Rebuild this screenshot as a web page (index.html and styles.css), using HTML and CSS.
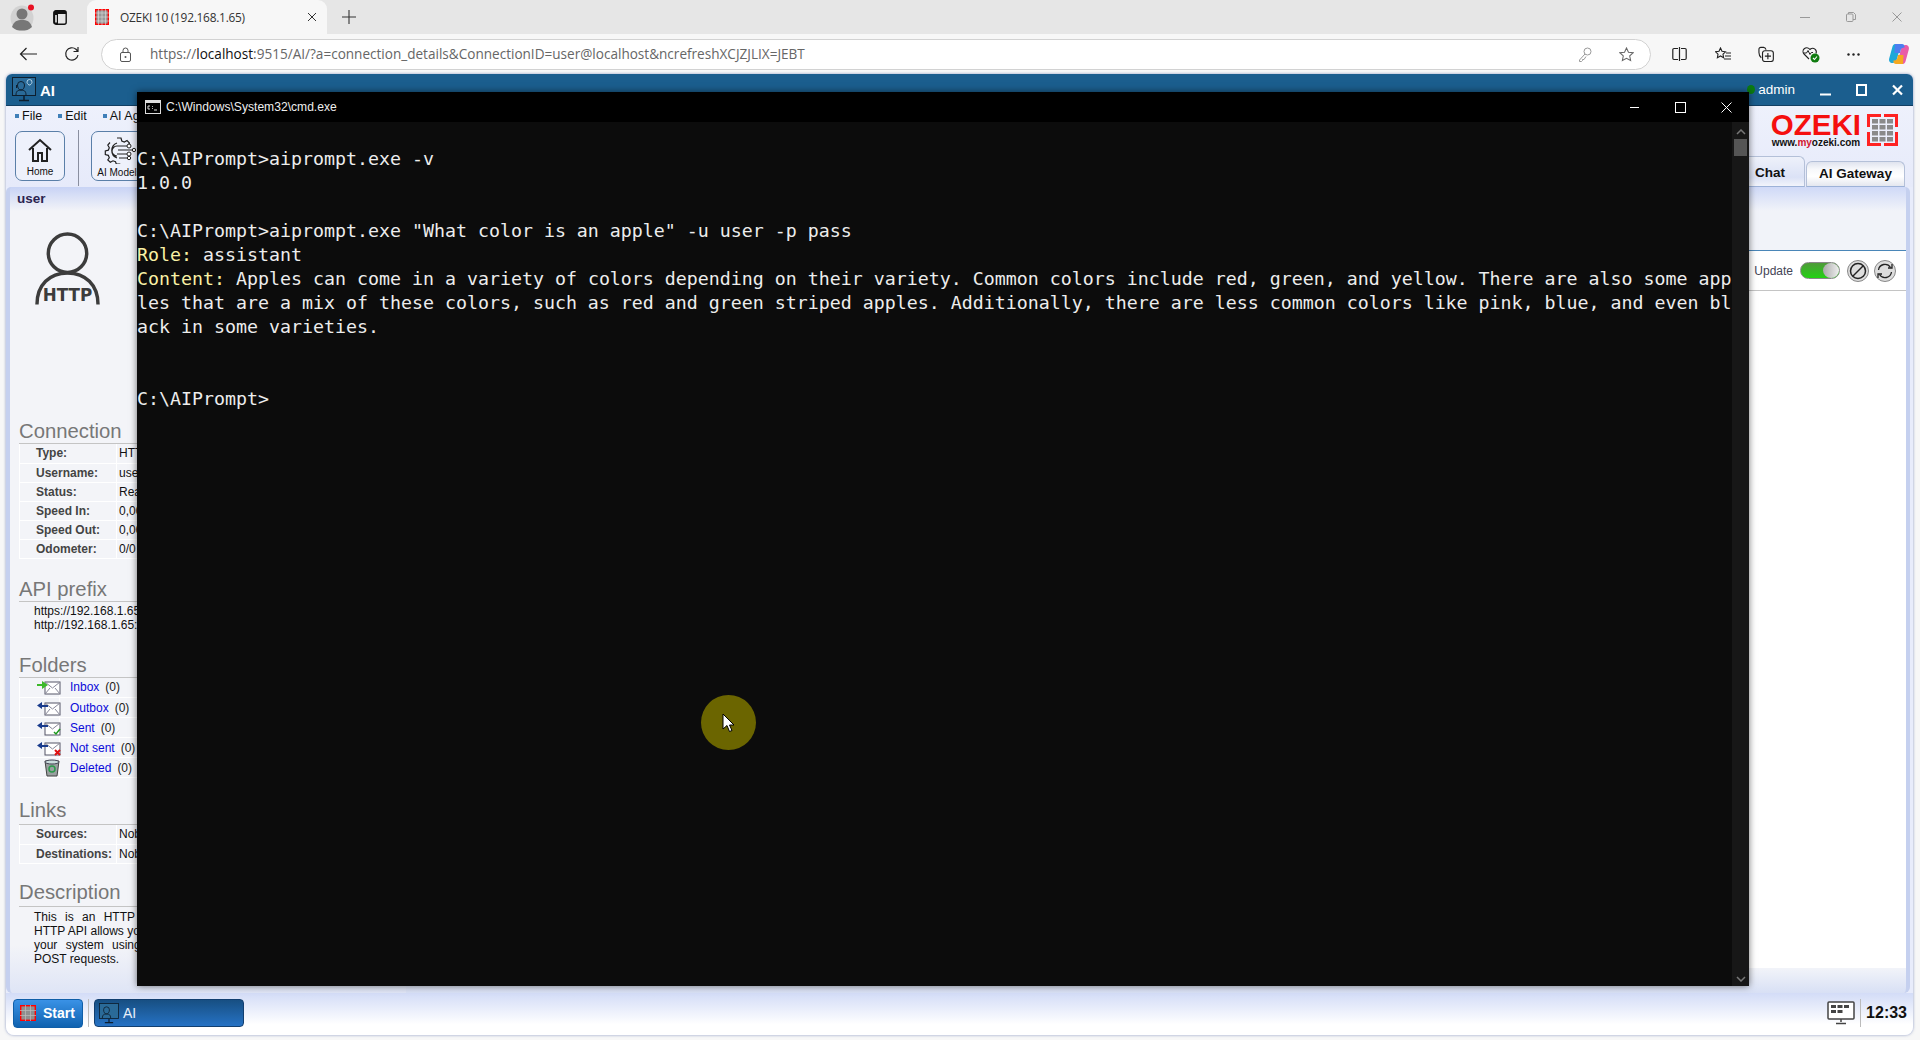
FILE: index.html
```html
<!DOCTYPE html>
<html lang="en">
<head>
<meta charset="utf-8">
<title>OZEKI 10 (192.168.1.65)</title>
<link rel="stylesheet" href="styles.css">
</head>
<body>
<div class="tabstrip">
  <div class="avatar"><svg width="26" height="28" viewBox="0 0 26 28"><ellipse cx="12" cy="15" rx="11.500" ry="12.500" fill="#d2d2d2"/><circle cx="12" cy="11" r="5.500" fill="#777"/><path d="M2 24c2-6 5-7 10-7s8 1 10 7c-3 3-6 3.500-10 3.500S5 27 2 24z" fill="#777"/><circle cx="21" cy="4.500" r="3" fill="#e81123"/></svg></div>
  <svg class="tabs-btn" width="14" height="15" viewBox="0 0 14 15"><rect x=".8" y=".8" width="12.400" height="13.400" rx="2" fill="none" stroke="#111" stroke-width="1.400"/><path d="M1 1h12v3H1zM1 4h4v10H1z" fill="#111"/><rect x="2.200" y="5" width="1.600" height="7.500" fill="#eee"/></svg>
  <div class="tab">
    <svg width="14" height="16" viewBox="0 0 14 16"><rect x=".7" y=".7" width="12.600" height="14.600" fill="#999" stroke="#f00" stroke-width="1.400"/><path d="M0 4h14M0 8h14M0 12h14M3.500 0v16M7 0v16M10.500 0v16" stroke="#ddd" stroke-width=".6"/></svg>
    <span class="tab-title">OZEKI 10 (192.168.1.65)</span>
    <svg class="tab-x" width="10" height="10" viewBox="0 0 10 10"><path d="M1 1l8 8M9 1l-8 8" stroke="#333" stroke-width="1"/></svg>
  </div>
  <svg class="tab-new" width="14" height="14" viewBox="0 0 14 14"><path d="M7 0v14M0 7h14" stroke="#333" stroke-width="1.100"/></svg>
  <div class="caption">
    <svg width="10" height="10" viewBox="0 0 10 10"><path d="M0 5.500h10" stroke="#999"/></svg>
    <svg width="10" height="10" viewBox="0 0 10 10"><rect x=".5" y="2" width="6.500" height="7.500" rx="1" fill="none" stroke="#999"/><path d="M2.500 2V.5h5l2 2v5H7" fill="none" stroke="#999"/></svg>
    <svg width="10" height="10" viewBox="0 0 10 10"><path d="M.5.500l9 9M9.500.500l-9 9" stroke="#999"/></svg>
  </div>
</div>
<div class="toolbar">
  <svg class="nav-back" width="18" height="14" viewBox="0 0 18 14"><path d="M7.500 1L1.500 7l6 6M1.500 7H18" fill="none" stroke="#222" stroke-width="1.200"/></svg>
  <svg class="nav-reload" width="16" height="16" viewBox="0 0 16 16"><path d="M14 9A6.200 6.200 0 1 1 12 3.300L14 5.500M14 1v4.500H9.500" fill="none" stroke="#222" stroke-width="1.200"/></svg>
  <div class="address">
    <svg width="11" height="15" viewBox="0 0 11 15"><rect x=".5" y="5.500" width="10" height="9" rx="1.500" fill="none" stroke="#555"/><path d="M3 5.500V3.500a2.500 2.500 0 0 1 5 0v2" fill="none" stroke="#555"/><circle cx="5.500" cy="10" r="1" fill="#555"/></svg>
    <span class="url">https://<b>localhost</b>:9515/AI/?a=connection_details&amp;ConnectionID=user@localhost&amp;ncrefreshXCJZJLIX=JEBT</span>
    <svg class="addr-key" width="14" height="15" viewBox="0 0 14 15"><circle cx="9.500" cy="4.500" r="3.500" fill="none" stroke="#999"/><path d="M7 7l-5.500 6v1.500h2l1-1v-1h1.500l2-3" fill="none" stroke="#999"/></svg>
    <svg class="addr-star" width="15" height="15" viewBox="0 0 16 16"><path d="M8 1l2.100 4.500 5 .6-3.700 3.400 1 4.900L8 12l-4.400 2.400 1-4.900L.9 6.100l5-.6z" fill="none" stroke="#666" stroke-width="1.100"/></svg>
  </div>
  <div class="tools">
    <svg width="15" height="14" viewBox="0 0 15 14"><path d="M6 1.500H2a1.200 1.200 0 0 0-1.200 1.200v8.600A1.200 1.200 0 0 0 2 12.500h4M9 1.500h4a1.200 1.200 0 0 1 1.200 1.200v8.600a1.200 1.200 0 0 1-1.200 1.200H9M7.500 0v14" fill="none" stroke="#222" stroke-width="1.200"/></svg>
    <svg width="16" height="15" viewBox="0 0 16 15"><path d="M5.500 1l1.500 3.300 3.500.5-2.500 2.400.6 3.500-3.100-1.700-3.100 1.700.6-3.500L.5 4.800 4 4.300zM11 6h5M10 9h6M9 12h7" fill="none" stroke="#222" stroke-width="1.100"/></svg>
    <svg width="16" height="16" viewBox="0 0 17 17"><path d="M3.500 12.500C1.500 11 1 9 1 7V3.500a2 2 0 0 1 2-2h3a3 3 0 0 1 2.500 2.500" fill="none" stroke="#222" stroke-width="1.200"/><rect x="4.800" y="5" width="11.500" height="11.500" rx="2.500" fill="none" stroke="#222" stroke-width="1.200"/><path d="M10.500 7.500v6.500M7.300 10.700h6.500" stroke="#222" stroke-width="1.200"/></svg>
    <svg width="18" height="18" viewBox="0 0 18 18"><path d="M7 14L2 9a3.700 3.700 0 0 1 5.500-5L8 4.500l.5-.5A3.700 3.700 0 0 1 14 8.500" fill="none" stroke="#222" stroke-width="1.100"/><path d="M1 8h3.500L6 5.500l2 4 1.300-2H11" fill="none" stroke="#222"/><circle cx="13" cy="13" r="4.500" fill="#107c10"/><path d="M11 13l1.500 1.500 2.500-3" fill="none" stroke="#fff" stroke-width="1.100"/></svg>
    <svg width="13" height="3" viewBox="0 0 13 3"><circle cx="1.500" cy="1.500" r="1.200" fill="#222"/><circle cx="6.500" cy="1.500" r="1.200" fill="#222"/><circle cx="11.500" cy="1.500" r="1.200" fill="#222"/></svg>
    <svg width="22" height="22" viewBox="0 0 22 22"><path d="M7 1h6L9 16c-.6 2.500-2.500 4-4.500 4C2 20 .5 18 1.200 15.500L4.500 3.500C5 2 6 1 7 1z" fill="#1fa8d8"/><path d="M15 21H9l4-15c.6-2.500 2.500-4 4.500-4 2.500 0 4 2 3.300 4.500l-3.300 12C17 20 16 21 15 21z" fill="#e95ca8"/><path d="M7 1h7c2 0 3 2 2.500 3.500a4 4 0 0 0-3.500 1.500l-1 4H6.500z" fill="#4d7df0"/><path d="M15 21H8c-2 0-3-2-2.500-3.500A4 4 0 0 0 9 16l1-4h5.500z" fill="#f5a81f"/></svg>
  </div>
</div>
<main class="desktop">
  <div class="app">
    <header class="app-title">
      <div class="app-name">
        <svg width="24" height="25" viewBox="0 0 24 25"><rect x=".5" y=".5" width="23" height="18" fill="#2a6a98" stroke="#0d1e2e"/><path d="M4 18c0-4 2-5 5-5s5 1 5 5M5.500 8a3.500 3.500 0 0 1 7 0c0 3-1.500 5-3.500 5S5.500 11 5.500 8zM4.500 8v3" fill="none" stroke="#0d1e2e"/><path d="M17 8c-1.500-1-2-2-2-3a2.500 2.500 0 0 1 5 0c0 1-.5 2-2 3z" fill="none" stroke="#cfe6f5" stroke-width=".8"/><path d="M7 23.500h10M12 19v4" stroke="#0d1e2e" stroke-width="1.500"/></svg>
        <span class="app-label">AI</span>
      </div>
      <div class="app-user">
        <i class="status-dot"></i><span class="username">admin</span>
        <svg class="wb" width="11" height="12" viewBox="0 0 11 12"><path d="M0 10.500h11" stroke="#fff" stroke-width="2"/></svg>
        <svg class="wb" width="11" height="12" viewBox="0 0 11 12"><rect x="1" y="1" width="9" height="10" fill="none" stroke="#fff" stroke-width="2"/></svg>
        <svg class="wb" width="11" height="12" viewBox="0 0 11 12"><path d="M1 1.500l9 9M10 1.500l-9 9" stroke="#fff" stroke-width="2.200"/></svg>
      </div>
    </header>
    <section class="ribbon">
      <div class="ribbon-left">
        <nav class="menu"><span>File</span><span>Edit</span><span>AI Agents</span></nav>
        <div class="buttons">
          <button class="tbtn">
            <svg width="24" height="24" viewBox="0 0 24 24"><path d="M1 12L12 2l11 10M5 10v13h5v-8h4v8h5V10" fill="none" stroke="#222" stroke-width="2"/></svg>
            <span>Home</span>
          </button>
          <i class="tsep"></i>
          <button class="tbtn tbtn-wide">
            <svg width="32" height="27" viewBox="0 0 32 27"><path d="M13 1h4l.8 3 2.500 1 2.700-1.500 2.500 2.500-1.500 2.700M6 5.500L3.800 8l1.500 2.700-1 2.500-3 .8v3.500l3 .8 1 2.500L3.800 23l2.500 2.300 2.700-1.500 2.500 1 .8 2.200h4" fill="none" stroke="#222" stroke-width="1.200"/><path d="M13 9a5 5 0 0 0 0 10M13 6a8 8 0 0 0 0 15" fill="none" stroke="#222" stroke-width="1.200"/><path d="M13 9h10M14 13h14M13 17h10M15 21h8" stroke="#222" stroke-width="1"/><circle cx="25" cy="9" r="2" fill="#fff" stroke="#222"/><circle cx="30" cy="13" r="1.700" fill="#fff" stroke="#222"/><circle cx="25" cy="17" r="2" fill="#fff" stroke="#222"/><circle cx="25" cy="21" r="1.700" fill="#fff" stroke="#222"/></svg>
            <span>AI Models</span>
          </button>
        </div>
      </div>
      <div class="ribbon-right">
        <div class="logo">
          <div class="logo-text"><strong>OZEKI</strong><small>www.<em>my</em>ozeki.com</small></div>
          <svg width="31" height="32" viewBox="0 0 31 32"><path d="M14 1.500H1.500V13M1.500 18v12.500H14M17 1.500h12.500V13M29.500 18v12.500H17" fill="none" stroke="#f22" stroke-width="3"/><g fill="#8a8a8a"><rect x="5" y="5" width="6" height="4.500"/><rect x="12.500" y="5" width="6" height="4.500"/><rect x="20" y="5" width="6" height="4.500"/><rect x="5" y="11" width="6" height="4.500"/><rect x="12.500" y="11" width="6" height="4.500"/><rect x="20" y="11" width="6" height="4.500"/><rect x="5" y="17" width="6" height="4.500"/><rect x="12.500" y="17" width="6" height="4.500"/><rect x="20" y="17" width="6" height="4.500"/><rect x="5" y="23" width="6" height="4.500"/><rect x="12.500" y="23" width="6" height="4.500"/><rect x="20" y="23" width="6" height="4.500"/></g></svg>
        </div>
        <div class="maintabs"><span class="mtab mtab-active">Chat</span><span class="mtab">AI Gateway</span></div>
      </div>
    </section>
    <div class="panels">
      <aside class="side">
        <div class="side-title">user</div>
        <svg class="conn-ic" width="65" height="74" viewBox="0 0 66 74"><circle cx="33" cy="21" r="19.500" fill="none" stroke="#3c3c3c" stroke-width="3.500"/><path d="M2 73c0-20 13-32 31-32s31 12 31 32" fill="none" stroke="#3c3c3c" stroke-width="3.500"/><text x="33" y="70" text-anchor="middle" class="http-t">HTTP</text></svg>
        <h3 class="sec sec-conn">Connection</h3>
        <table class="kv">
          <tr><th>Type:</th><td>HTTP API user</td></tr>
          <tr><th>Username:</th><td>user</td></tr>
          <tr><th>Status:</th><td>Ready</td></tr>
          <tr><th>Speed In:</th><td>0,00</td></tr>
          <tr><th>Speed Out:</th><td>0,00</td></tr>
          <tr><th>Odometer:</th><td>0/0</td></tr>
        </table>
        <h3 class="sec sec-api">API prefix</h3>
        <div class="prefix"><div>https://192.168.1.65:9515</div><div>http://192.168.1.65:9515</div></div>
        <h3 class="sec sec-folders">Folders</h3>
        <table class="folders">
          <tr><th><svg width="24" height="16" viewBox="0 0 24 16"><rect x="8" y="3" width="15" height="12" fill="#fff" stroke="#556"/><path d="M8 3l7.500 6L23 3M8 15l5-6M23 15l-5-6" fill="none" stroke="#889"/><path d="M0 5h5V2l6 4-6 4V7H0z" fill="#3cb92a"/></svg></th><td><a>Inbox</a>(0)</td></tr>
          <tr><th><svg width="24" height="16" viewBox="0 0 24 16"><rect x="8" y="3" width="15" height="12" fill="#fff" stroke="#556"/><path d="M8 3l7.500 6L23 3M8 15l5-6M23 15l-5-6" fill="none" stroke="#889"/><path d="M11 5H5V2L0 5.500 5 9V7h6z" fill="#1a3c8c"/></svg></th><td><a>Outbox</a>(0)</td></tr>
          <tr><th><svg width="24" height="16" viewBox="0 0 24 16"><rect x="8" y="3" width="15" height="12" fill="#fff" stroke="#556"/><path d="M8 3l7.500 6L23 3" fill="none" stroke="#889"/><path d="M11 5H5V2L0 5.500 5 9V7h6z" fill="#1a3c8c"/><path d="M17 12l2 2 4-5" fill="none" stroke="#1b9a1b" stroke-width="1.500"/></svg></th><td><a>Sent</a>(0)</td></tr>
          <tr><th><svg width="24" height="16" viewBox="0 0 24 16"><rect x="8" y="3" width="15" height="12" fill="#fff" stroke="#556"/><path d="M8 3l7.500 6L23 3" fill="none" stroke="#889"/><path d="M11 5H5V2L0 5.500 5 9V7h6z" fill="#1a3c8c"/><path d="M18 10l5 5M23 10l-5 5" stroke="#e01010" stroke-width="2"/></svg></th><td><a>Not sent</a>(0)</td></tr>
          <tr><th><svg class="bin" width="18" height="17" viewBox="0 0 18 17"><path d="M2 2h14l-2 15H4z" fill="#9aa0a0" stroke="#444"/><ellipse cx="9" cy="3" rx="7" ry="2" fill="#cdd" stroke="#445"/><circle cx="9" cy="10" r="3" fill="none" stroke="#2a9a4a" stroke-width="1.500"/></svg></th><td><a>Deleted</a>(0)</td></tr>
        </table>
        <h3 class="sec sec-links">Links</h3>
        <table class="kv">
          <tr><th>Sources:</th><td>Nobody</td></tr>
          <tr><th>Destinations:</th><td>Nobody</td></tr>
        </table>
        <h3 class="sec sec-desc">Description</h3>
        <p class="desc"><span class="loose">This is an HTTP API user connection.</span><br>HTTP API allows you to connect to<br><span class="loose">your system using HTTP GET and</span><br>POST requests.</p>
      </aside>
      <section class="content">
        <div class="content-head"></div>
        <div class="content-white">
          <div class="update-row">
            <span class="update-label">Update</span>
            <span class="toggle"><i></i></span>
            <span class="round"><svg width="18" height="18" viewBox="0 0 18 18"><circle cx="9" cy="9" r="7.500" fill="none" stroke="#222" stroke-width="1.500"/><path d="M4 14L14 4" stroke="#222" stroke-width="1.500"/></svg></span>
            <span class="round"><svg width="18" height="18" viewBox="0 0 18 18"><path d="M2.500 8a6.500 6.500 0 0 1 12-2.500M15.500 10a6.500 6.500 0 0 1-12 2.500" fill="none" stroke="#222" stroke-width="1.300"/><path d="M12 6h4V2M6 12H2v4" fill="none" stroke="#222" stroke-width="1.300"/></svg></span>
          </div>
        </div>
      </section>
    </div>
    <footer class="taskbar">
      <button class="start">
        <svg width="16" height="16" viewBox="0 0 16 16"><rect x=".7" y=".7" width="14.600" height="14.600" fill="#8f8f8f" stroke="#f00" stroke-width="1.400"/><path d="M0 5.500h16M0 10.500h16M5.500 0v16M10.500 0v16" stroke="#bbb" stroke-width=".7"/></svg>
        <span>Start</span>
      </button>
      <i class="task-sep"></i>
      <button class="taskapp">
        <svg width="20" height="21" viewBox="0 0 24 25"><rect x=".5" y=".5" width="23" height="18" fill="#2a6a98" stroke="#0d1e2e"/><path d="M4 18c0-4 2-5 5-5s5 1 5 5M5.500 8a3.500 3.500 0 0 1 7 0c0 3-1.500 5-3.500 5S5.500 11 5.500 8z" fill="none" stroke="#0d1e2e"/><path d="M7 23.500h10M12 19v4" stroke="#0d1e2e" stroke-width="1.500"/></svg>
        <span>AI</span>
      </button>
      <div class="tray">
        <svg width="28" height="24" viewBox="0 0 28 24"><rect x="1" y="1" width="26" height="17" rx="1" fill="#fff" stroke="#444" stroke-width="1.500"/><path d="M4 4h5v3H4zM10.500 4h5v3h-5zM17 4h5v3h-5zM4 9h5v3H4zM10.500 9h5v3h-5z" fill="#444"/><path d="M14 18v3M9 22.500h10" stroke="#444" stroke-width="1.500"/></svg>
        <i class="task-sep"></i>
        <span class="clock">12:33</span>
      </div>
    </footer>
  </div>
  <div class="cmd">
    <div class="cmd-title">
      <svg width="16" height="14" viewBox="0 0 16 14"><rect x=".5" y=".5" width="15" height="13" fill="#000" stroke="#ddd"/><rect x="1" y="1" width="14" height="2" fill="#ddd"/><path d="M3 6h2M3 6v3h2M7 6.500h.8M7 8.500h.8M9 10h3" stroke="#ddd"/></svg>
      <span class="cmd-name">C:\Windows\System32\cmd.exe</span>
      <div class="cmd-caption">
        <svg width="11" height="11" viewBox="0 0 11 11"><path d="M1 5.500h9" stroke="#fff"/></svg>
        <svg width="11" height="11" viewBox="0 0 11 11"><rect x=".5" y=".5" width="10" height="10" fill="none" stroke="#fff"/></svg>
        <svg width="11" height="11" viewBox="0 0 11 11"><path d="M.5.500l10 10M10.500.500l-10 10" stroke="#fff"/></svg>
      </div>
    </div>
    <div class="cmd-body">
<pre class="term">

C:\AIPrompt&gt;aiprompt.exe -v
1.0.0

C:\AIPrompt&gt;aiprompt.exe "What color is an apple" -u user -p pass
<span class="y">Role:</span> assistant
<span class="y">Content:</span> Apples can come in a variety of colors depending on their variety. Common colors include red, green, and yellow. There are also some app
les that are a mix of these colors, such as red and green striped apples. Additionally, there are less common colors like pink, blue, and even bl
ack in some varieties.


C:\AIPrompt&gt;</pre>
      <div class="scrollbar">
        <svg width="10" height="6" viewBox="0 0 10 6"><path d="M1 5l4-4 4 4" fill="none" stroke="#777" stroke-width="1.500"/></svg>
        <i class="thumb"></i>
        <svg class="sb-down" width="10" height="6" viewBox="0 0 10 6"><path d="M1 1l4 4 4-4" fill="none" stroke="#777" stroke-width="1.500"/></svg>
      </div>
      <div class="clickmark"><svg width="13" height="20" viewBox="0 0 13 20"><path d="M1 1v15l4-3.500 2.500 6 2.500-1-2.500-5.500H12z" fill="#fff" stroke="#000"/></svg></div>
    </div>
  </div>
</main>
</body>
</html>
```
FILE: styles.css
```css
* { box-sizing: border-box; }
html, body { margin: 0; height: 100%; }
body { width: 1920px; height: 1040px; overflow: hidden; display: flex; flex-direction: column; font-family: "Liberation Sans", Arial, sans-serif; background: #f7f7f7; }
button { font-family: inherit; padding: 0; }

.tabstrip { height: 34px; flex: none; background: #e6e6e6; display: flex; align-items: center; padding-left: 10px; }
.avatar { width: 26px; height: 28px; margin-right: 17px; }
.tabs-btn { margin-right: 20px; }
.tab { width: 240px; height: 34px; background: #f7f7f7; border-radius: 9px 9px 0 0; display: flex; align-items: center; padding: 0 10px 0 8px; }
.tab-title { font-family: "Open Sans", sans-serif; font-size: 11.900px; color: #333; margin-left: 11px; flex: 1; white-space: nowrap; letter-spacing: -.25px; }
.tab-new { margin-left: 15px; }
.caption { margin-left: auto; display: flex; gap: 36px; padding-right: 18px; }

.toolbar { height: 40px; flex: none; background: #f7f7f7; display: flex; align-items: center; }
.nav-back { margin-left: 19px; }
.nav-reload { margin-left: 27px; }
.address { margin-left: 21px; width: 1550px; height: 31px; background: #fff; border: 1px solid #d2d2d2; border-radius: 16px; display: flex; align-items: center; padding: 0 16px 0 18px; }
.url { font-family: "Open Sans", sans-serif; font-size: 13.570px; line-height: 18px; color: #666; margin-left: 19px; flex: 1; white-space: nowrap; }
.url b { font-weight: 400; color: #111; }
.addr-star { margin-left: 27px; }
.tools { display: flex; align-items: center; gap: 27.500px; margin-left: 21px; }

.desktop { flex: 1; position: relative; display: flex; padding: 0 7px 5px 6px; min-height: 0; }
.app { flex: 1; display: flex; flex-direction: column; background: #e8ecfb; border-radius: 6px 6px 8px 8px; box-shadow: 0 0 3px rgba(90,110,170,.7); overflow: hidden; }
.app-title { height: 32px; flex: none; background: #1b5e8e; border-bottom: 1px solid #123f63; display: flex; align-items: center; justify-content: space-between; color: #fff; padding: 0 10px 0 6px; }
.app-name { display: flex; align-items: center; gap: 4px; font-size: 15px; font-weight: 700; }
.app-label { padding-top: 2px; }
.app-user { display: flex; align-items: center; }
.wb { margin-left: 25px; }
.status-dot { width: 8px; height: 9px; border-radius: 50%; background: #0b7a12; margin-right: 3px; }
.username { font-size: 13.500px; }

.ribbon { height: 81px; flex: none; display: flex; justify-content: space-between; background: linear-gradient(#eef1fc, #e6eafa); }
.ribbon-left { padding-left: 9px; }
.menu { height: 19px; display: flex; gap: 16px; align-items: center; font-size: 12.500px; color: #111; }
.menu span::before { content: ""; display: inline-block; width: 4px; height: 4px; background: #3f7fb8; margin-right: 3px; vertical-align: 2px; }
.buttons { display: flex; align-items: flex-start; height: 57px; padding-top: 6px; }
.tbtn { width: 50px; height: 50px; background: #eef1fb; border: 1px solid #5a7fa8; border-radius: 7px; display: flex; flex-direction: column; align-items: center; justify-content: flex-start; font-size: 10px; color: #111; padding-top: 6px; gap: 4px; }
.tbtn-wide { width: 57px; padding-top: 5px; gap: 3px; white-space: nowrap; }
.tsep { width: 1px; height: 56px; background: #8a8fa0; margin: -1px 12px 0 13px; }
.ribbon-right { width: 250px; display: flex; flex-direction: column; align-items: flex-end; }
.logo { display: flex; height: 40px; align-items: flex-start; gap: 6px; padding: 8px 15px 0 0; }
.logo-text { display: flex; flex-direction: column; align-items: center; line-height: 1; margin-top: -1px; }
.logo-text strong { font-size: 29.500px; color: #f50f0f; line-height: 24px; font-weight: 700; }
.logo-text small { font-size: 10px; color: #111; font-weight: 700; line-height: 12px; }
.logo-text em { color: #d2132e; font-style: normal; }
.maintabs { flex: 1; display: flex; align-items: flex-end; padding-right: 8px; }
.mtab { height: 26px; width: 99px; background: linear-gradient(#dfe3ee, #f7f8fb 30%, #fff 60%, #e4e7ef); border: 1px solid #b4c0d8; border-bottom-color: #9db2d8; border-radius: 6px 6px 0 0; font-size: 13.500px; font-weight: 700; text-align: center; line-height: 24px; color: #111; }
.mtab-active { height: 31px; line-height: 32px; width: 76px; margin-right: 1px; background: linear-gradient(#eef1fa, #dbe2f6 70%, #f2f4fb); text-align: left; padding-left: 25px; }

.panels { flex: 1; display: flex; min-height: 0; padding: 0 3px 0 0; }
.side { width: 400px; flex: none; padding: 0 0 0 9px; background: linear-gradient(#c8d3f5, #f3f4f8 24px, #f3f4f8 94%, #dfe5f6); border-left: 4px solid #c5d0ef; border-radius: 5px 0 0 6px; overflow: hidden; }
.side-title { font-size: 13.500px; font-weight: 700; color: #2b2450; height: 24px; line-height: 24px; margin-left: -2px; }
.conn-ic { display: block; margin: 21px 0 0 16px; }
.sec { margin: 0; font-size: 20.300px; font-weight: 400; color: #777; height: 25px; line-height: 24px; border-bottom: 1px solid #c4c4c4; width: 300px; white-space: nowrap; }
.sec-conn { margin-top: 113px; }
.sec-api { margin-top: 18px; }
.sec-folders { margin-top: 22px; }
.sec-links { margin-top: 20px; height: 27px; }
.sec-desc { margin-top: 16px; height: 27px; }
.kv, .folders { border-collapse: collapse; width: 300px; table-layout: fixed; }
.kv th, .kv td, .folders th, .folders td { border: 1px solid #fff; border-top: 0; padding: 0; white-space: nowrap; }
.kv th, .kv td { height: 19px; }
.kv th { width: 97px; color: #444; text-align: left; padding-left: 16px; font-weight: 700; font-size: 12px; }
.kv td { color: #111; padding-left: 2px; font-size: 12px; }
.folders th, .folders td { height: 20px; }
.folders th { width: 40px; text-align: left; padding-left: 17px; }
.folders th svg { display: block; overflow: visible; }
.folders th .bin { margin-left: 6px; }
.folders td { padding-left: 10px; font-size: 12px; color: #222; }
.folders a { color: #0a0ad8; margin-right: 6px; }
.prefix { padding: 2px 0 0 15px; font-size: 12px; line-height: 14px; color: #111; height: 29px; white-space: nowrap; }
.desc { margin: 3px 0 0 15px; font-size: 12px; line-height: 14px; color: #111; white-space: nowrap; }
.loose { word-spacing: 5px; }
.http-t { font: 700 17px "DejaVu Sans", sans-serif; fill: #3c3c3c; }

.content { flex: 1; display: flex; flex-direction: column; background: linear-gradient(#cfd9f7, #f1f3f9 24px, #f1f3f9 97%, #d8e0f5); border-right: 4px solid #c5d0ef; border-radius: 0 5px 6px 0; padding: 0 0 25px; }
.content-head { height: 63px; flex: none; }
.content-white { flex: 1; background: #fff; border-top: 1px solid #4a86b8; }
.update-row { height: 40px; border-bottom: 1px solid #c4c4c4; display: flex; align-items: center; justify-content: flex-end; padding-right: 10px; }
.update-label { font-size: 12px; color: #445; margin-right: 7px; }
.toggle { width: 40px; height: 17px; border-radius: 9px; background: linear-gradient(#4f9a3a, #22d212); border: 1px solid #888; margin-right: 7px; display: flex; justify-content: flex-end; }
.toggle i { width: 16px; height: 15px; border-radius: 50%; background: linear-gradient(90deg, #aaa, #eee); }
.round { width: 22px; height: 22px; border-radius: 50%; background: #ddd; border: 1px solid #888; display: flex; align-items: center; justify-content: center; }
.round + .round { margin-left: 5px; }

.taskbar { height: 42px; flex: none; background: linear-gradient(#d3dcf7, #fff 75%); display: flex; align-items: center; padding: 0 6px 2px 7px; }
.start { width: 70px; height: 29px; border: 1px solid #0f5ea8; border-radius: 4px; background: linear-gradient(#3a92e6, #0f62b0); color: #fff; font-size: 14px; font-weight: 700; display: flex; align-items: center; gap: 7px; padding-left: 6px; }
.task-sep { width: 1px; height: 28px; background: #bbb; margin: 0 5px; }
.taskapp { width: 150px; height: 28px; border: 1px solid #123f70; border-radius: 4px; background: linear-gradient(#174f82, #2672c4); color: #e8f0fa; font-size: 14px; display: flex; align-items: center; gap: 4px; padding-left: 4px; }
.tray { margin-left: auto; display: flex; align-items: center; }
.clock { font-size: 16px; font-weight: 700; color: #111; }

.cmd { position: absolute; left: 137px; top: 18px; width: 1612px; height: 894px; display: flex; flex-direction: column; box-shadow: 0 0 7px rgba(0,0,0,.55); background: #0c0c0c; }
.cmd-title { height: 30px; flex: none; background: #000; display: flex; align-items: center; padding-left: 8px; color: #eee; }
.cmd-name { font-size: 12.100px; margin-left: 5px; }
.cmd-caption { margin-left: auto; display: flex; gap: 35px; padding-right: 17px; }
.cmd-body { flex: 1; position: relative; display: flex; min-height: 0; }
.term { flex: 1; margin: 0; padding: 1px 0 0 0; font: 400 18.280px/24px "DejaVu Sans Mono", monospace; color: #ededed; overflow: hidden; }
.y { color: #f9f1a5; }
.scrollbar { width: 17px; flex: none; background: #171717; display: flex; flex-direction: column; align-items: center; padding: 7px 0 4px; }
.thumb { display: block; width: 13px; height: 17px; background: #555; margin-top: 4px; }
.sb-down { margin-top: auto; }
.clickmark { position: absolute; left: 564px; top: 573px; width: 55px; height: 55px; border-radius: 50%; background: #6b6500; display: flex; align-items: center; justify-content: center; }
```
